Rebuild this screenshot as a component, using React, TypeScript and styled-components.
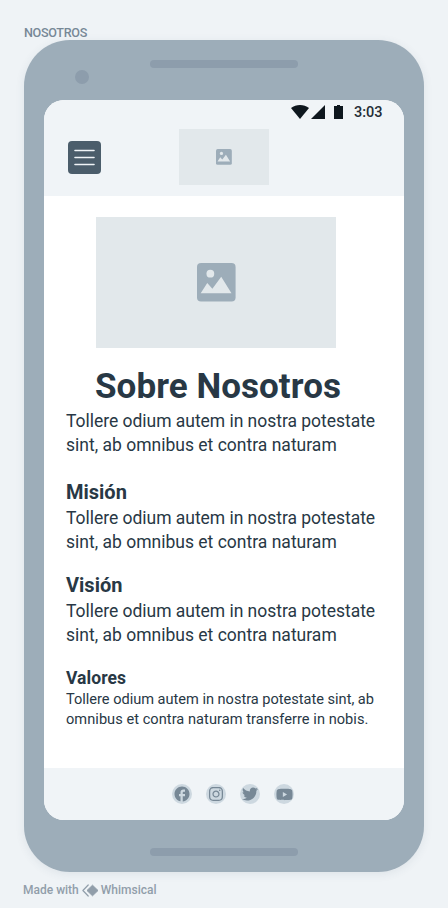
import React from 'react';
import styled, { createGlobalStyle } from 'styled-components';
import { FaTwitter, FaYoutube, FaInstagram } from 'react-icons/fa';
import { MdFacebook } from 'react-icons/md';

const color = {
  page: '#eff3f6',
  frame: '#9dadb9',
  frameDetail: '#8d9dac',
  surface: '#f0f4f7',
  placeholder: '#e2e8eb',
  ink: '#283845',
  button: '#4b5d6b',
  muted: '#778896',
  credit: '#919eaa',
  badge: '#cdd8e0',
  status: '#0e171e',
};

const GlobalStyle = createGlobalStyle`
  *, *::before, *::after { box-sizing: border-box; }
  body {
    margin: 0;
    background: ${color.page};
    font-family: Roboto, "Liberation Sans", sans-serif;
    color: ${color.ink};
  }
  h1, h2, p { margin: 0; }
  svg { display: block; flex: none; }
`;

const Page = styled.div`
  width: 448px;
  height: 908px;
  padding: 25px 24px 0;
  overflow: hidden;
  background: ${color.page};
`;

const BoardLabel = styled.div`
  height: 15px;
  font-size: 12.6px;
  font-weight: 500;
  line-height: 16px;
  letter-spacing: -0.32px;
  color: ${color.muted};
`;

const Phone = styled.div`
  width: 400px;
  height: 832px;
  display: flex;
  flex-direction: column;
  border-radius: 46px;
  background: ${color.frame};
  box-shadow: 0 2px 10px rgba(60, 80, 100, 0.09);
`;

const TopBezel = styled.div`
  display: flex;
  align-items: flex-start;
  gap: 61px;
  height: 60px;
  padding: 20px 0 0 51px;
`;

const BottomBezel = styled.div`
  display: flex;
  justify-content: center;
  padding-top: 28px;
`;

const Camera = styled.div`
  width: 14px;
  height: 14px;
  margin-top: 10px;
  border-radius: 50%;
  background: ${color.frameDetail};
`;

const Speaker = styled.div`
  width: 148px;
  height: 8px;
  border-radius: 4px;
  background: ${color.frameDetail};
`;

const Screen = styled.div`
  display: flex;
  flex-direction: column;
  height: 720px;
  margin: 0 20px;
  border-radius: 20px;
  overflow: hidden;
  background: #fff;
`;

const Header = styled.header`
  height: 96px;
  background: ${color.surface};
`;

const StatusBar = styled.div`
  display: flex;
  justify-content: flex-end;
  align-items: center;
  height: 24px;
  padding-right: 21px;
  color: ${color.status};
`;

const StatusIcons = styled.svg`
  width: 52px;
  height: 14px;
  fill: currentColor;
`;

const Clock = styled.span`
  width: 29px;
  margin-left: 11px;
  padding-top: 2px;
  font-size: 14.5px;
  font-weight: 500;
  line-height: 22px;
  white-space: nowrap;
  color: #252d36;
`;

const NavBar = styled.div`
  display: flex;
  align-items: center;
  gap: 78px;
  height: 56px;
  margin-top: 5px;
  padding-left: 24px;
`;

const MenuButton = styled.button`
  display: flex;
  flex-direction: column;
  align-items: center;
  justify-content: center;
  width: 33px;
  height: 33px;
  margin-top: 1px;
  padding: 0;
  border: 0;
  border-radius: 4px;
  background: ${color.button};
`;

const MenuLines = styled.svg`
  width: 21px;
  height: 17px;
  stroke: ${color.surface};
  stroke-width: 1.6;
  stroke-linecap: round;
`;

const Placeholder = styled.div<{ $width: number; $height: number }>`
  display: flex;
  align-items: center;
  justify-content: center;
  width: ${(p) => p.$width}px;
  height: ${(p) => p.$height}px;
  background: ${color.placeholder};
`;

const Content = styled.main`
  flex: 1;
  padding: 21px 20px 0 22px;
`;

const Hero = styled.div`
  padding-left: 30px;
`;

const Title = styled.h1`
  margin: 18px 0 1px 29px;
  font-size: 35px;
  font-weight: 700;
  line-height: 42px;
  letter-spacing: 0.06px;
  white-space: nowrap;
`;

const Section = styled.section<{ $top: number }>`
  margin-top: ${(p) => p.$top}px;
`;

const Heading = styled.h2<{ $small?: boolean }>`
  margin-bottom: ${(p) => (p.$small ? 0 : 1)}px;
  font-size: ${(p) => (p.$small ? 17.5 : 20)}px;
  font-weight: 700;
  line-height: ${(p) => (p.$small ? 22 : 26)}px;
  letter-spacing: ${(p) => (p.$small ? 0.08 : 0)}px;
`;

const Line = styled.span<{ $tracking: number }>`
  display: block;
  letter-spacing: ${(p) => p.$tracking}px;
  white-space: nowrap;
`;

const Copy = styled.p<{ $small?: boolean }>`
  font-size: ${(p) => (p.$small ? 14.6 : 17.5)}px;
  line-height: ${(p) => (p.$small ? 20 : 24)}px;
`;

const Footer = styled.footer`
  display: flex;
  align-items: center;
  gap: 14px;
  height: 52px;
  padding-left: 128px;
  background: ${color.surface};
`;

const SocialBadge = styled.a`
  display: flex;
  align-items: center;
  justify-content: center;
  width: 20px;
  height: 20px;
  border-radius: 50%;
  background: ${color.badge};
  color: ${color.muted};
`;

const Credit = styled.div`
  display: flex;
  align-items: center;
  height: 16px;
  margin: 10px 0 0 -1px;
  font-size: 12px;
  font-weight: 500;
  line-height: 16px;
  color: ${color.credit};
`;

const CreditLogo = styled.svg`
  width: 17px;
  height: 13px;
  margin: 0 2px 0 3px;
`;

function PictureIcon({ size }: { size: number }) {
  return (
    <svg width={size} height={size} viewBox="0 0 38 38">
      <rect width="37.6" height="37.6" rx="4" fill={color.frame} />
      <circle cx="13" cy="10.4" r="3.8" fill={color.placeholder} />
      <path d="M3.6 29.5 L10 19.4 L15 25 L23.6 13.4 L33.6 29.5 Z" fill={color.placeholder} />
    </svg>
  );
}

function BodyCopy() {
  return (
    <Copy>
      <Line $tracking={-0.03}>Tollere odium autem in nostra potestate</Line>
      <Line $tracking={0.005}>sint, ab omnibus et contra naturam</Line>
    </Copy>
  );
}

export default function App() {
  return (
    <Page>
      <GlobalStyle />
      <BoardLabel>NOSOTROS</BoardLabel>
      <Phone>
        <TopBezel>
          <Camera />
          <Speaker />
        </TopBezel>
        <Screen>
          <Header>
            <StatusBar>
              <StatusIcons viewBox="0 0 52 14">
                <path d="M0 3 C5 -1 13 -1 18 3 L9 14 Z" />
                <path d="M20 14 L34 0 V14 Z" />
                <path d="M43 1 H46 V0 H49 V1 H52 V14 H43 Z" />
              </StatusIcons>
              <Clock>3:03</Clock>
            </StatusBar>
            <NavBar>
              <MenuButton aria-label="Menú">
                <MenuLines viewBox="0 0 21 17">
                  <path d="M1 1.5 H20 M1 8.5 H20 M1 15.5 H20" />
                </MenuLines>
              </MenuButton>
              <Placeholder $width={90} $height={56}>
                <PictureIcon size={16} />
              </Placeholder>
            </NavBar>
          </Header>
          <Content>
            <Hero>
              <Placeholder $width={240} $height={131}>
                <PictureIcon size={39} />
              </Placeholder>
            </Hero>
            <Title>Sobre Nosotros</Title>
            <BodyCopy />
            <Section $top={22}>
              <Heading>Misión</Heading>
              <BodyCopy />
            </Section>
            <Section $top={18}>
              <Heading>Visión</Heading>
              <BodyCopy />
            </Section>
            <Section $top={20}>
              <Heading $small>Valores</Heading>
              <Copy $small>
                <Line $tracking={-0.02}>Tollere odium autem in nostra potestate sint, ab</Line>
                <Line $tracking={0.04}>omnibus et contra naturam transferre in nobis.</Line>
              </Copy>
            </Section>
          </Content>
          <Footer>
            <SocialBadge aria-label="Facebook"><MdFacebook size={18} /></SocialBadge>
            <SocialBadge aria-label="Instagram"><FaInstagram size={16} /></SocialBadge>
            <SocialBadge aria-label="Twitter"><FaTwitter size={16} /></SocialBadge>
            <SocialBadge aria-label="YouTube"><FaYoutube size={17} /></SocialBadge>
          </Footer>
        </Screen>
        <BottomBezel>
          <Speaker />
        </BottomBezel>
      </Phone>
      <Credit>
        <span>Made with</span>
        <CreditLogo viewBox="0 0 17 13">
          <path d="M6.2 1 L0.9 6.5 L6.2 12" fill="none" stroke={color.credit} strokeWidth="1.2" strokeLinejoin="round" strokeLinecap="round" />
          <path d="M10.5 1.2 L16 6.5 L10.5 11.8 L5 6.5 Z" fill={color.credit} stroke={color.credit} strokeWidth="1" strokeLinejoin="round" />
        </CreditLogo>
        <span>Whimsical</span>
      </Credit>
    </Page>
  );
}
